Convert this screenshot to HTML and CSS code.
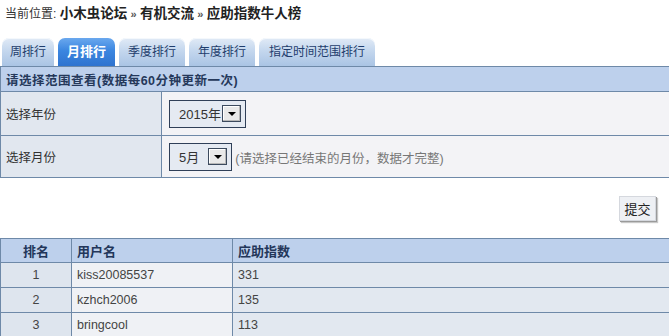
FILE: index.html
```html
<!DOCTYPE html>
<html lang="zh-CN">
<head>
  <meta charset="UTF-8" />
  <title>应助指数牛人榜 - 小木虫论坛</title>
  <link rel="stylesheet" href="styles.css">
</head>
<body>

  <!-- Breadcrumb -->
  <div class="crumb">
    当前位置: <b>小木虫论坛</b> <span class="sep">»</span> <b>有机交流</b> <span class="sep">»</span> <b>应助指数牛人榜</b>
  </div>

  <!-- Tabs -->
  <ul class="tabs">
    <li><a href="#">周排行</a></li>
    <li class="active"><a href="#">月排行</a></li>
    <li><a href="#">季度排行</a></li>
    <li><a href="#">年度排行</a></li>
    <li><a href="#">指定时间范围排行</a></li>
  </ul>

  <!-- Range form -->
  <form class="range-form">
    <table class="range-table">
      <tr>
        <th colspan="2">请选择范围查看(数据每60分钟更新一次)</th>
      </tr>
      <tr>
        <td class="label">选择年份</td>
        <td class="value">
          <span class="fake-select year">
            <span class="sel-text">2015年</span>
            <span class="sel-btn"></span>
          </span>
        </td>
      </tr>
      <tr>
        <td class="label">选择月份</td>
        <td class="value">
          <span class="fake-select month">
            <span class="sel-text">5月</span>
            <span class="sel-btn"></span>
          </span>
          <span class="hint">(请选择已经结束的月份，数据才完整)</span>
        </td>
      </tr>
    </table>

    <div class="submit-row">
      <button type="submit" class="submit-button">提交</button>
    </div>
  </form>

  <!-- Ranking list -->
  <table class="rank-table">
    <tr>
      <th class="col-rank">排名</th>
      <th class="col-user">用户名</th>
      <th>应助指数</th>
    </tr>
    <tr>
      <td class="col-rank">1</td>
      <td class="col-user">kiss20085537</td>
      <td>331</td>
    </tr>
    <tr>
      <td class="col-rank">2</td>
      <td class="col-user">kzhch2006</td>
      <td>135</td>
    </tr>
    <tr>
      <td class="col-rank">3</td>
      <td class="col-user">bringcool</td>
      <td>113</td>
    </tr>
  </table>

</body>
</html>
```

FILE: styles.css
```css
/* Basic Reset */
* {
  margin: 0;
  padding: 0;
  box-sizing: border-box;
}

body {
  font-family: "Liberation Sans", "Noto Sans CJK SC", sans-serif;
  font-size: 12px;
  color: #333;
  background-color: #fff;
  width: 669px;
  overflow: hidden;
}

/* Breadcrumb */
.crumb {
  padding: 7px 0 0 5px;
  height: 38px;
  line-height: 14px;
  color: #333;
}

.crumb b {
  font-size: 13.5px;
  color: #222;
}

.crumb .sep {
  color: #555;
  font-weight: bold;
  font-size: 11px;
}

/* Tabs */
.tabs {
  display: flex;
  gap: 4px;
  list-style: none;
  padding-left: 2px;
  height: 28px;
}

.tabs li a {
  display: block;
  height: 28px;
  line-height: 28px;
  padding: 0 8px;
  font-size: 12px;
  color: #1f3d6c;
  text-decoration: none;
  border-radius: 7px 7px 0 0;
  background: linear-gradient(#e1eaf6, #c4d7ee 45%, #aac4e4);
  box-shadow: inset 0 1px 0 #f4f8fc;
}

.tabs li:nth-child(n+3) a {
  padding: 0 9px;
}

.tabs li:last-child a {
  padding: 0 10px;
}

.tabs li.active a {
  padding: 0 9px;
  font-size: 13px;
  color: #fff;
  font-weight: bold;
  background: linear-gradient(#6aa8ee, #3b86e0 45%, #2f73cf);
  box-shadow: none;
}

/* Range form */
.range-table {
  width: 100%;
  border-collapse: collapse;
  border-left: 1px solid #6e89a8;
}

.range-table th {
  height: 25px;
  padding-left: 5px;
  text-align: left;
  font-size: 12.5px;
  letter-spacing: 0.5px;
  font-weight: bold;
  color: #25385a;
  background-color: #bdd0ec;
  border-top: 1px solid #6e89a8;
  border-bottom: 1px solid #6e89a8;
}

.range-table td {
  border-bottom: 1px solid #6e89a8;
}

.range-table tr:nth-child(2) td {
  height: 44px;
}

.range-table tr:nth-child(3) td {
  height: 42px;
}

.range-table .label {
  width: 161px;
  padding-left: 5px;
  font-size: 12.5px;
  background-color: #e1e7ef;
  border-right: 1px solid #6e89a8;
}

.range-table .value {
  padding-left: 7px;
  background-color: #f3f3f6;
}

/* Old style select box */
.fake-select {
  display: inline-flex;
  align-items: center;
  vertical-align: middle;
  height: 28px;
  padding: 0 4px 0 9px;
  border: 1px solid #2f3f58;
  background-color: #e5eaf2;
  font-size: 13px;
  color: #333;
}

.fake-select.year {
  width: 77px;
}

.fake-select.month {
  width: 63px;
}

.fake-select .sel-text {
  flex: 1;
}

.fake-select .sel-btn {
  position: relative;
  width: 19px;
  height: 17px;
  border: 1px solid #3c4a5e;
  background-color: #e9e9e9;
  box-shadow: inset -1px -1px 0 #b8b8b8, inset 1px 1px 0 #fff;
}

/* little arrow inside select button */
.fake-select .sel-btn::after {
  content: "";
  position: absolute;
  left: 5px;
  top: 6px;
  border-left: 4px solid transparent;
  border-right: 4px solid transparent;
  border-top: 4px solid #000;
}

.hint {
  vertical-align: middle;
  font-size: 12.5px;
  color: #777;
}

/* Submit */
.submit-row {
  display: flex;
  justify-content: flex-end;
  padding: 18px 13px 17px 0;
}

.submit-button {
  width: 37px;
  height: 25px;
  font-family: "Noto Sans CJK SC", sans-serif;
  font-size: 13px;
  color: #222;
  background-color: #eef0f4;
  border: 1px solid #d5d8de;
  box-shadow: 1px 1px 0 #9a9a9a, 2px 2px 1px #c8c8c8;
  cursor: pointer;
}

/* Ranking table */
.rank-table {
  width: 100%;
  border-collapse: collapse;
  border-left: 1px solid #6e89a8;
}

.rank-table th,
.rank-table td {
  height: 25px;
  padding-left: 5px;
  text-align: left;
  font-size: 12.5px;
  color: #444;
  border: 1px solid #6e89a8;
  border-right: none;
  background-color: #e2e8f0;
}

.rank-table th {
  height: 24px;
  font-size: 13px;
  font-weight: bold;
  color: #23365a;
  background-color: #bdd0ec;
}

.rank-table .col-rank {
  width: 71px;
  padding-left: 0;
  text-align: center;
  background-color: #dee5ee;
}

.rank-table th.col-rank {
  background-color: #bdd0ec;
}

.rank-table .col-user {
  width: 161px;
  background-color: #eff1f5;
}

.rank-table th.col-user {
  background-color: #bdd0ec;
}
```
